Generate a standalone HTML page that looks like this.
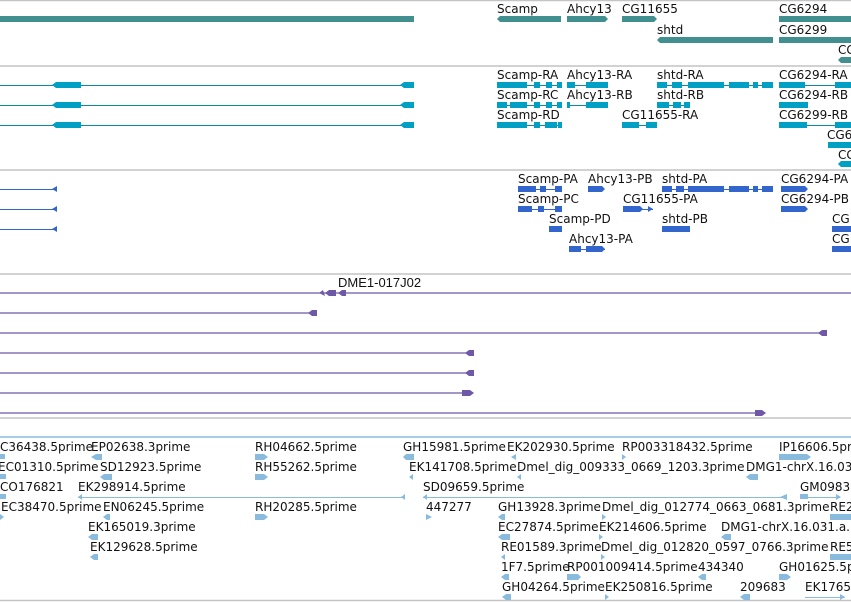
<!DOCTYPE html>
<html><head><meta charset="utf-8"><style>
html,body{margin:0;padding:0;background:#fff;}
svg{display:block;}
text{font-family:"DejaVu Sans","Liberation Sans",sans-serif;font-size:12px;fill:#111;}
.sm{font-family:"Liberation Sans",sans-serif;font-size:13px;}
</style></head><body>
<svg width="851" height="602" viewBox="0 0 851 602" xmlns="http://www.w3.org/2000/svg">
<g stroke="#c4c4c4" stroke-width="1.5">
<line x1="0" y1="0.5" x2="851" y2="0.5"/>
<line x1="0" y1="66" x2="851" y2="66"/>
<line x1="0" y1="170" x2="851" y2="170"/>
<line x1="0" y1="274" x2="851" y2="274"/>
<line x1="0" y1="418" x2="851" y2="418"/>
<line x1="0" y1="600.5" x2="851" y2="600.5"/>
</g>
<line x1="0" y1="437" x2="851" y2="437" stroke="#88bbdd" stroke-width="1.5"/>

<g fill="#418f8f">
<rect x="0" y="16" width="414" height="6"/>
<polygon points="497,19 500,16 561,16 561,22 500,22"/>
<polygon points="567,16 605,16 608,19 605,22 567,22"/>
<polygon points="622,16 654,16 657,19 654,22 622,22"/>
<rect x="779" y="16" width="72" height="6"/>
<polygon points="657,40 660,37 773,37 773,43 660,43"/>
<rect x="779" y="37" width="72" height="6"/>
<polygon points="838,60 841,57 851,57 851,63 841,63"/>
</g>
<text x="497" y="13">Scamp</text><text x="567" y="13">Ahcy13</text><text x="622" y="13">CG11655</text><text x="779" y="13">CG6294</text>
<text x="657" y="34">shtd</text><text x="779" y="34">CG6299</text><text x="838" y="54">CG</text>

<g stroke="#0a8aa8" stroke-width="1">
<line x1="0" y1="85.5" x2="414" y2="85.5"/><line x1="0" y1="105.5" x2="414" y2="105.5"/><line x1="0" y1="125.5" x2="414" y2="125.5"/>
<line x1="497" y1="85.5" x2="562" y2="85.5"/><line x1="567" y1="85.5" x2="608" y2="85.5"/><line x1="657" y1="85.5" x2="773" y2="85.5"/><line x1="779" y1="85.5" x2="851" y2="85.5"/>
<line x1="497" y1="105.5" x2="562" y2="105.5"/><line x1="567" y1="105.5" x2="608" y2="105.5"/><line x1="657" y1="105.5" x2="690" y2="105.5"/>
<line x1="497" y1="125.5" x2="562" y2="125.5"/><line x1="622" y1="125.5" x2="657" y2="125.5"/><line x1="779" y1="125.5" x2="851" y2="125.5"/>
</g>
<g fill="#00a0c4">
<polygon points="52,85 56,82 81,82 81,88 56,88"/><polygon points="400,85 404,82 414,82 414,88 404,88"/>
<polygon points="52,105 56,102 81,102 81,108 56,108"/><polygon points="400,105 404,102 414,102 414,108 404,108"/>
<polygon points="52,125 56,122 81,122 81,128 56,128"/><polygon points="400,125 404,122 414,122 414,128 404,128"/>
<rect x="497" y="82" width="30" height="6"/><rect x="534" y="82" width="6" height="6"/><rect x="546" y="82" width="6" height="6"/><rect x="557" y="82" width="5" height="6"/>
<rect x="567" y="82" width="8" height="6"/><rect x="586" y="82" width="22" height="6"/>
<rect x="657" y="82" width="10" height="6"/><rect x="672" y="82" width="10" height="6"/><rect x="688" y="82" width="36" height="6"/><rect x="729" y="82" width="20" height="6"/><rect x="753" y="82" width="5" height="6"/><rect x="762" y="82" width="11" height="6"/>
<rect x="779" y="82" width="26" height="6"/><rect x="835" y="82" width="16" height="6"/>
<rect x="497" y="102" width="10" height="6"/><rect x="510" y="102" width="17" height="6"/><rect x="534" y="102" width="6" height="6"/><rect x="546" y="102" width="6" height="6"/><rect x="557" y="102" width="5" height="6"/>
<rect x="567" y="102" width="3" height="6"/><rect x="586" y="102" width="22" height="6"/>
<rect x="657" y="102" width="12" height="6"/><rect x="673" y="102" width="8" height="6"/><rect x="684" y="102" width="6" height="6"/>
<rect x="779" y="102" width="29" height="6"/>
<rect x="497" y="122" width="30" height="6"/><rect x="534" y="122" width="6" height="6"/><rect x="545" y="122" width="12" height="6"/><rect x="558" y="122" width="4" height="6"/>
<rect x="622" y="122" width="17" height="6"/><rect x="646" y="122" width="11" height="6"/>
<rect x="779" y="122" width="28" height="6"/><rect x="835" y="122" width="16" height="6"/>
<rect x="828" y="142" width="23" height="6"/>
<polygon points="838,164 841,161 851,161 851,167 841,167"/>
</g>
<text x="497" y="79">Scamp-RA</text><text x="567" y="79">Ahcy13-RA</text><text x="657" y="79">shtd-RA</text><text x="779" y="79">CG6294-RA</text>
<text x="497" y="99">Scamp-RC</text><text x="567" y="99">Ahcy13-RB</text><text x="657" y="99">shtd-RB</text><text x="779" y="99">CG6294-RB</text>
<text x="497" y="119">Scamp-RD</text><text x="622" y="119">CG11655-RA</text><text x="779" y="119">CG6299-RB</text>
<text x="827" y="139">CG6</text><text x="838" y="159">CG</text>

<g stroke="#3366cc" stroke-width="1">
<line x1="0" y1="189.5" x2="57" y2="189.5"/><line x1="0" y1="209.5" x2="57" y2="209.5"/><line x1="0" y1="229.5" x2="57" y2="229.5"/>
<line x1="518" y1="189.5" x2="562" y2="189.5"/><line x1="662" y1="189.5" x2="773" y2="189.5"/>
<line x1="518" y1="209.5" x2="562" y2="209.5"/><line x1="623" y1="209.5" x2="653" y2="209.5"/>
<line x1="569" y1="249.5" x2="605" y2="249.5"/>
</g>
<g fill="#3366cc">
<polygon points="52,189 57,186 57,192"/><polygon points="52,209 57,206 57,212"/><polygon points="52,229 57,226 57,232"/>
<rect x="518" y="186" width="18" height="6"/><rect x="540" y="186" width="6" height="6"/><rect x="555" y="186" width="7" height="6"/>
<polygon points="588,186 602,186 605,189 602,192 588,192"/>
<rect x="662" y="186" width="10" height="6"/><rect x="676" y="186" width="8" height="6"/><rect x="688" y="186" width="36" height="6"/><rect x="729" y="186" width="20" height="6"/><rect x="753" y="186" width="5" height="6"/><rect x="762" y="186" width="11" height="6"/>
<polygon points="781,186 805,186 808,189 805,192 781,192"/>
<rect x="518" y="206" width="14" height="6"/><rect x="538" y="206" width="6" height="6"/><rect x="555" y="206" width="7" height="6"/>
<polygon points="623,206 640,206 643,209 640,212 623,212"/><polygon points="648,206 653,209 648,212"/>
<polygon points="781,206 805,206 808,209 805,212 781,212"/>
<rect x="549" y="226" width="13" height="6"/>
<rect x="662" y="226" width="28" height="6"/>
<rect x="832" y="226" width="19" height="6"/>
<rect x="569" y="246" width="12" height="6"/><polygon points="586,246 602,246 605,249 602,252 586,252"/>
<rect x="832" y="246" width="19" height="6"/>
</g>
<text x="518" y="183">Scamp-PA</text><text x="588" y="183">Ahcy13-PB</text><text x="662" y="183">shtd-PA</text><text x="781" y="183">CG6294-PA</text>
<text x="518" y="203">Scamp-PC</text><text x="623" y="203">CG11655-PA</text><text x="781" y="203">CG6294-PB</text>
<text x="549" y="223">Scamp-PD</text><text x="662" y="223">shtd-PB</text><text x="832" y="223">CG</text>
<text x="569" y="243">Ahcy13-PA</text><text x="832" y="243">CG</text>

<g stroke="#6f58a8" stroke-width="1.2">
<line x1="0" y1="293" x2="851" y2="293"/><line x1="0" y1="313" x2="314" y2="313"/><line x1="0" y1="333" x2="826" y2="333"/>
<line x1="0" y1="353" x2="472" y2="353"/><line x1="0" y1="373" x2="472" y2="373"/><line x1="0" y1="393" x2="472" y2="393"/><line x1="0" y1="413" x2="765" y2="413"/>
</g>
<g fill="#6f58a8">
<polygon points="319,293 323,290 325,296"/><polygon points="325,293 329,290 336,290 336,296 329,296"/><polygon points="338,293 342,290 346,290 346,296 342,296"/>
<polygon points="308,313 312,310 317,310 317,316 312,316"/>
<polygon points="818,333 822,330 827,330 827,336 822,336"/>
<polygon points="465,353 469,350 474,350 474,356 469,356"/>
<polygon points="465,373 469,370 474,370 474,376 469,376"/>
<polygon points="462,390 470,390 474,393 470,396 462,396"/>
<polygon points="755,410 762,410 766,413 762,416 755,416"/>
</g>
<text class="sm" x="338" y="287">DME1-017J02</text>

<g stroke="#88bbdd" stroke-width="1">
<line x1="78" y1="497.5" x2="405" y2="497.5"/><line x1="423" y1="497.5" x2="787" y2="497.5"/><line x1="800" y1="497.5" x2="840" y2="497.5"/>
<line x1="805" y1="597.5" x2="845" y2="597.5"/>
</g>
<g fill="#88bbdd">
<rect x="0" y="454" width="5" height="5"/><polygon points="91,457 96,454 102,454 102,460 96,460"/><polygon points="255,454 264,454 268,457 264,460 255,460"/><polygon points="403,457 406,454 414,454 414,460 406,460"/><polygon points="511,457 516,454 516,460"/><polygon points="622,454 626,457 622,460"/><polygon points="779,454 807,454 811,457 807,460 779,460"/>
<rect x="0" y="474" width="6" height="5"/><polygon points="100,477 104,474 112,474 112,480 104,480"/><polygon points="255,474 264,474 268,477 264,480 255,480"/><polygon points="409,477 413,474 413,480"/><polygon points="517,477 521,474 521,480"/><polygon points="746,477 750,474 758,474 758,480 750,480"/>
<rect x="0" y="494" width="6" height="5"/><polygon points="78,497 82,494 82,500"/><polygon points="401,497 405,494 405,500"/><polygon points="423,497 427,494 427,500"/><polygon points="780,497 787,494 787,500"/><rect x="800" y="494" width="8" height="5"/><polygon points="836,494 841,497 836,500"/>
<polygon points="0,514 4,517 0,520"/><polygon points="103,517 107,514 110,514 110,520 107,520"/><polygon points="255,514 264,514 268,517 264,520 255,520"/><polygon points="426,514 432,517 426,520"/><polygon points="498,517 502,514 505,514 505,520 502,520"/><polygon points="602,514 606,517 602,520"/><polygon points="830,514 851,514 851,520 830,520"/>
<polygon points="88,537 92,534 98,534 98,540 92,540"/><polygon points="498,537 502,534 510,534 510,540 502,540"/><polygon points="599,534 603,537 599,540"/><polygon points="721,537 725,534 731,534 731,540 725,540"/>
<polygon points="90,557 94,554 98,554 98,560 94,560"/><polygon points="501,557 505,554 505,560"/><polygon points="601,554 605,557 601,560"/><polygon points="830,554 851,554 851,560 830,560"/>
<polygon points="501,577 505,574 509,574 509,580 505,580"/><polygon points="567,574 578,574 581,577 578,580 567,580"/><polygon points="698,577 702,574 706,574 706,580 702,580"/><polygon points="779,574 787,574 791,577 787,580 779,580"/>
<polygon points="502,597 506,594 511,594 511,600 506,600"/><polygon points="605,594 609,597 605,600"/><polygon points="740,597 744,594 750,594 750,600 744,600"/><polygon points="840,594 845,597 840,600"/>
</g>
<text x="0" y="451">C36438.5prime</text><text x="91" y="451">EP02638.3prime</text><text x="255" y="451">RH04662.5prime</text><text x="403" y="451">GH15981.5prime</text><text x="507" y="451">EK202930.5prime</text><text x="622" y="451">RP003318432.5prime</text><text x="779" y="451">IP16606.5prime</text>
<text x="-2" y="471">EC01310.5prime</text><text x="100" y="471">SD12923.5prime</text><text x="255" y="471">RH55262.5prime</text><text x="409" y="471">EK141708.5prime</text><text x="517" y="471">Dmel_dig_009333_0669_1203.3prime</text><text x="746" y="471">DMG1-chrX.16.031.a.</text>
<text x="0" y="491">CO176821</text><text x="78" y="491">EK298914.5prime</text><text x="423" y="491">SD09659.5prime</text><text x="800" y="491">GM0983</text>
<text x="1" y="511">EC38470.5prime</text><text x="103" y="511">EN06245.5prime</text><text x="255" y="511">RH20285.5prime</text><text x="426" y="511">447277</text><text x="498" y="511">GH13928.3prime</text><text x="602" y="511">Dmel_dig_012774_0663_0681.3prime</text><text x="830" y="511">RE2</text>
<text x="88" y="531">EK165019.3prime</text><text x="498" y="531">EC27874.5prime</text><text x="599" y="531">EK214606.5prime</text><text x="721" y="531">DMG1-chrX.16.031.a.</text>
<text x="90" y="551">EK129628.5prime</text><text x="501" y="551">RE01589.3prime</text><text x="601" y="551">Dmel_dig_012820_0597_0766.3prime</text><text x="830" y="551">RE5</text>
<text x="501" y="571">1F7.5prime</text><text x="567" y="571">RP001009414.5prime</text><text x="698" y="571">434340</text><text x="779" y="571">GH01625.5prime</text>
<text x="502" y="591">GH04264.5prime</text><text x="605" y="591">EK250816.5prime</text><text x="740" y="591">209683</text><text x="805" y="591">EK1765</text>
</svg>
</body></html>
